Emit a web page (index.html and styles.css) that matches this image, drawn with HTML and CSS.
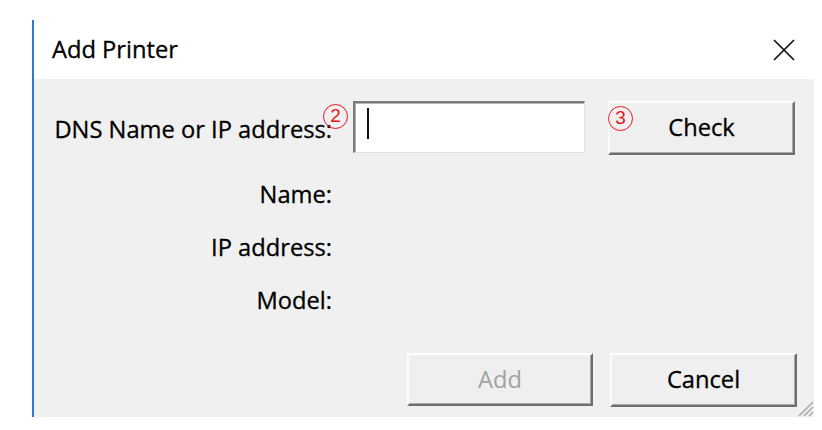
FILE: index.html
```html
<!DOCTYPE html>
<html>
<head>
<meta charset="utf-8">
<link rel="stylesheet" href="styles.css">
</head>
<body>
<div class="window">
  <div class="titlebar">
    <span class="title">Add Printer</span>
    <svg class="close" width="22" height="22" viewBox="0 0 22 22"><path d="M1 1L21 21M21 1L1 21" stroke="#111" stroke-width="1.7" fill="none"/></svg>
  </div>
  <div class="client">
    <div class="form">
      <div class="label label-dns">DNS Name or IP address:<span class="marker marker-2">2</span></div>
      <div class="field">
        <div class="textbox"><span class="caret"></span></div>
        <button class="btn btn-check"><span class="marker marker-3">3</span>Check</button>
      </div>
      <div class="label">Name:</div>
      <div class="value"></div>
      <div class="label">IP address:</div>
      <div class="value"></div>
      <div class="label">Model:</div>
      <div class="value"></div>
    </div>
    <div class="footer">
      <button class="btn btn-add" disabled>Add</button>
      <button class="btn btn-cancel">Cancel</button>
    </div>
    <svg class="grip" width="21" height="21" viewBox="0 0 21 21"><path d="M20 6L6 20M20 11L11 20M20 16L16 20" stroke="#a8a8a8" stroke-width="1.5" fill="none"/></svg>
  </div>
</div>
</body>
</html>
```
FILE: styles.css
```css
html, body {
  margin: 0;
  padding: 0;
  background: #ffffff;
}
body {
  font-family: "Open Sans", "Noto Sans", sans-serif;
  color: #000;
}
.window {
  margin: 20px 0 0 32px;
  width: 780px;
  height: 397px;
  border-left: 2px solid #2b7bd0;
  display: flex;
  flex-direction: column;
}
.titlebar {
  height: 59px;
  flex: none;
  display: flex;
  align-items: center;
  padding: 0 19px 0 18px;
  background: #fff;
}
.title {
  font-size: 23.7px;
  line-height: 1;
  flex: 1;
  -webkit-text-stroke: 0.3px #000;
}
.close {
  display: block;
}
.client {
  position: relative;
  flex: 1;
  background: #f0f0f0;
  display: flex;
  flex-direction: column;
}
.form {
  display: grid;
  grid-template-columns: 298px 1fr;
  grid-template-rows: 54px 30px 30px 30px;
  row-gap: 23px;
  column-gap: 21px;
  padding-top: 22px;
  font-size: 23.7px;
}
.label {
  position: relative;
  display: flex;
  align-items: center;
  justify-content: flex-end;
  line-height: 1;
  padding-top: 4px;
  white-space: nowrap;
  -webkit-text-stroke: 0.3px #000;
}
.field {
  display: flex;
  align-items: flex-start;
  gap: 23px;
}
.textbox {
  box-sizing: border-box;
  width: 232px;
  height: 52px;
  background: #fff;
  border-top: 2px solid #7a7a7a;
  border-left: 2px solid #7a7a7a;
  border-right: 1px solid #e3e3e3;
  border-bottom: 1px solid #e3e3e3;
  box-shadow: inset 1px 1px 0 #b4b4b4;
  padding: 5px 0 0 12px;
}
.caret {
  display: block;
  width: 2px;
  height: 31px;
  background: #111;
}
.btn {
  position: relative;
  box-sizing: border-box;
  font-family: "Open Sans", "Noto Sans", sans-serif;
  font-size: 23.7px;
  color: #000;
  background: #efefef;
  border-top: 2px solid #fdfdfd;
  border-left: 2px solid #fdfdfd;
  border-right: 2px solid #6e6e6e;
  border-bottom: 2px solid #6e6e6e;
  box-shadow: inset -1px -1px 0 #a8a8a8;
  padding: 0;
  margin: 0;
  line-height: 1;
}
.btn-check,
.btn-cancel {
  -webkit-text-stroke: 0.3px #000;
}
.btn-check {
  width: 187px;
  height: 54px;
}
.footer {
  margin-top: auto;
  display: flex;
  justify-content: flex-end;
  gap: 17px;
  padding: 0 17px 10px 0;
}
.btn-add {
  width: 186px;
  height: 53px;
  color: #a2a2a2;
  margin-bottom: 1px;
}
.btn-cancel {
  width: 187px;
  height: 54px;
}
.marker {
  position: absolute;
  box-sizing: border-box;
  width: 25px;
  height: 25px;
  border: 1.5px solid #e8161b;
  border-radius: 50%;
  color: #e8161b;
  font-family: "Liberation Sans", sans-serif;
  font-size: 19px;
  line-height: 22px;
  text-align: center;
  -webkit-text-stroke: 0;
}
.marker-2 {
  right: -16px;
  top: 3px;
}
.marker-3 {
  left: -2px;
  top: 3px;
}
.grip {
  position: absolute;
  right: 0;
  bottom: 0;
}
```
